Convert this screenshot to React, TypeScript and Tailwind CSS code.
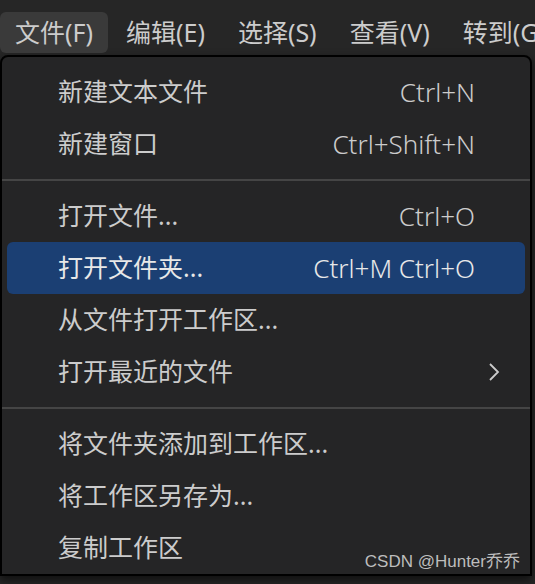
import React from 'react';

type Item =
  | { kind: 'item'; label: string; shortcut?: string; submenu?: boolean; active?: boolean }
  | { kind: 'sep' };

const items: Item[] = [
  { kind: 'item', label: '新建文本文件', shortcut: 'Ctrl+N' },
  { kind: 'item', label: '新建窗口', shortcut: 'Ctrl+Shift+N' },
  { kind: 'sep' },
  { kind: 'item', label: '打开文件...', shortcut: 'Ctrl+O' },
  { kind: 'item', label: '打开文件夹...', shortcut: 'Ctrl+M Ctrl+O', active: true },
  { kind: 'item', label: '从文件打开工作区...' },
  { kind: 'item', label: '打开最近的文件', submenu: true },
  { kind: 'sep' },
  { kind: 'item', label: '将文件夹添加到工作区...' },
  { kind: 'item', label: '将工作区另存为...' },
  { kind: 'item', label: '复制工作区' },
];

const menus = ['文件(F)', '编辑(E)', '选择(S)', '查看(V)', '转到(G)'];

const font = { fontFamily: '"Noto Sans", "Noto Sans CJK SC", sans-serif' };

export default function App() {
  return (
    <div className="relative w-[535px] h-[584px] overflow-hidden bg-[#262626] text-[#cccccc]" style={font}>
      {/* Menu bar */}
      <div className="flex items-center h-[55px] pt-[12px] pb-[2px] gap-[3px]">
        {menus.map((m, i) => (
          <div
            key={m}
            className={`h-[41px] flex items-center px-[15px] rounded-md text-[25px] whitespace-nowrap ${
              i === 0 ? 'bg-[#3a3a3a]' : ''
            }`}
          >
            {m}
          </div>
        ))}
      </div>

      {/* Dropdown */}
      <div className="w-[532px] border-2 border-black rounded-t-lg bg-[#252526] pt-[9px] shadow-[0_4px_10px_rgba(0,0,0,0.6)]">
        {items.map((it, i) =>
          it.kind === 'sep' ? (
            <div key={i} className="h-[20px] flex items-center">
              <div className="w-full h-[2px] bg-[#454545]" />
            </div>
          ) : (
            <div
              key={i}
              className={`mx-[5px] h-[52px] flex items-center pl-[51px] pr-[50px] rounded-md text-[25px] ${
                it.active ? 'bg-[#1b3f73] text-[#e8e8e8]' : ''
              }`}
            >
              <span className="flex-1 whitespace-nowrap">{it.label}</span>
              {it.shortcut && <span className="whitespace-nowrap text-[26px] font-light">{it.shortcut}</span>}
              {it.submenu && (
                <svg width="14" height="22" viewBox="0 0 14 22" className="mr-[-26px]">
                  <path d="M3 3 L11 11 L3 19" fill="none" stroke="#cccccc" strokeWidth="1.8" />
                </svg>
              )}
            </div>
          )
        )}
      </div>

      <div
        className="absolute right-[15px] bottom-[10px] text-[17px] text-[#bdbdbd]"
        style={{ fontFamily: '"Liberation Sans", "Noto Sans CJK SC", sans-serif' }}
      >
        CSDN @Hunter乔乔
      </div>
    </div>
  );
}
